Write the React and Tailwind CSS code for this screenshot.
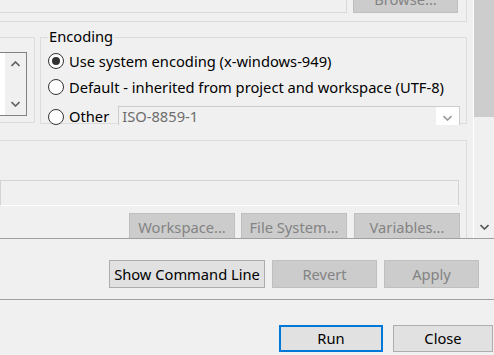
import React from 'react';

const Chevron = ({ up, color = '#606060', w = 9 }) => (
  <svg width={w} height="6" viewBox="0 0 9 6">
    {up ? (
      <polyline points="0.5,5 4.5,1 8.5,5" fill="none" stroke={color} strokeWidth="1.6" />
    ) : (
      <polyline points="0.5,1 4.5,5 8.5,1" fill="none" stroke={color} strokeWidth="1.6" />
    )}
  </svg>
);

const Radio = ({ checked, label }) => (
  <div className="flex items-center gap-[5px]">
    <div className="w-4 h-4 rounded-full border border-[#333] bg-white flex items-center justify-center shrink-0">
      {checked && <div className="w-2 h-2 rounded-full bg-[#333]" />}
    </div>
    <span className="text-black">{label}</span>
  </div>
);

const Button = ({ children, disabled, def, className = '' }) => (
  <div
    className={
      'flex items-center justify-center shrink-0 ' +
      (disabled
        ? 'bg-[#cccccc] border border-[#bfbfbf] text-[#838383] '
        : def
        ? 'bg-[#e1e1e1] border-2 border-[#0078d7] text-black '
        : 'bg-[#e1e1e1] border border-[#adadad] text-black ') +
      className
    }
  >
    {children}
  </div>
);

export default function App() {
  return (
    <div
      className="w-[494px] h-[355px] bg-[#f0f0f0] overflow-hidden text-[14.7px] leading-none"
      style={{ fontFamily: '"Noto Sans", "Open Sans", sans-serif' }}
    >
      <div className="flex h-[238px]">
        {/* main content */}
        <div className="w-[473px] flex flex-col">
          {/* clipped group at top */}
          <div className="w-[467px] h-[22px] shrink-0 border-r border-b border-[#dcdcdc] flex items-start overflow-hidden">
            <div className="w-[347px] h-[13px] border-b border-r border-[#d9d9d9] bg-[#f0f0f0]" />
            <Button disabled className="ml-[6px] w-[105px] h-[27px] -mt-[14px]">Browse...</Button>
          </div>

          <div className="flex mt-[15px] h-[87px] shrink-0">
            {/* left group */}
            <div className="w-[35px] h-[86px] border-t border-r border-b border-[#dcdcdc] pt-[14px]">
              <div className="w-[27px] h-[64px] border-t border-r border-b border-[#828282] bg-white flex">
                <div className="w-[5px]" />
                <div className="w-[21px] bg-[#f0f0f0] flex flex-col items-center justify-between py-[8px]">
                  <Chevron up />
                  <Chevron />
                </div>
              </div>
            </div>
            {/* encoding group */}
            <div className="ml-[5px] w-[427px] h-[87px] border border-[#dcdcdc] relative">
              <span className="absolute -top-[9px] left-[7px] px-[1px] bg-[#f0f0f0] text-black">Encoding</span>
              <div className="flex flex-col pl-[7px] pt-[15px]">
                <Radio checked label="Use system encoding (x-windows-949)" />
                <div className="mt-[10px]">
                  <Radio label="Default - inherited from project and workspace (UTF-8)" />
                </div>
                <div className="mt-[13px] flex items-center">
                  <Radio label="Other" />
                  <div className="ml-[9px] mt-[-2px] w-[342px] h-[19px] border border-[#cccccc] border-b-0 bg-[#f0f0f0] flex items-center">
                    <span className="pl-[3px] text-[#6d6d6d]">ISO-8859-1</span>
                    <div className="ml-auto w-[23px] h-full bg-white flex items-center justify-center pt-[3px]">
                      <Chevron color="#9a9a9a" />
                    </div>
                  </div>
                </div>
              </div>
            </div>
          </div>

          {/* lower group */}
          <div className="mt-[16px] w-[467px] flex-1 min-h-0 overflow-hidden border-t border-r border-[#dcdcdc] flex flex-col">
            <div className="mt-[39px] w-[459px] h-[26px] shrink-0 border border-[#d4d4d4] border-b-white bg-[#f0f0f0]" />
            <div className="mt-[7px] flex gap-[6px] pl-[129px]">
              <Button disabled className="w-[106px] h-[28px]">Workspace...</Button>
              <Button disabled className="w-[106px] h-[28px]">File System...</Button>
              <Button disabled className="ml-[1px] w-[106px] h-[28px]">Variables...</Button>
            </div>
          </div>
        </div>
        {/* scrollbar */}
        <div className="w-[21px] border-l border-white bg-[#f0f0f0] flex flex-col">
          <div className="h-[117px] bg-[#cdcdcd]" />
          <div className="flex-1 flex items-end justify-center pb-[8px]">
            <Chevron color="#555" />
          </div>
        </div>
      </div>

      <div className="border-t border-[#a0a0a0] h-[61px] flex justify-end items-start pr-[15px] pt-[21px] gap-[7px]">
        <Button className="w-[156px] h-[28px]">Show Command Line</Button>
        <Button disabled className="w-[105px] h-[28px]">Revert</Button>
        <Button disabled className="w-[95px] h-[28px]">Apply</Button>
      </div>

      <div className="border-t border-[#a0a0a0] flex justify-end pr-[1px] pt-[25px] gap-[10px]">
        <Button def className="w-[104px] h-[27px]">Run</Button>
        <Button className="w-[100px] h-[27px]">Close</Button>
      </div>
    </div>
  );
}
